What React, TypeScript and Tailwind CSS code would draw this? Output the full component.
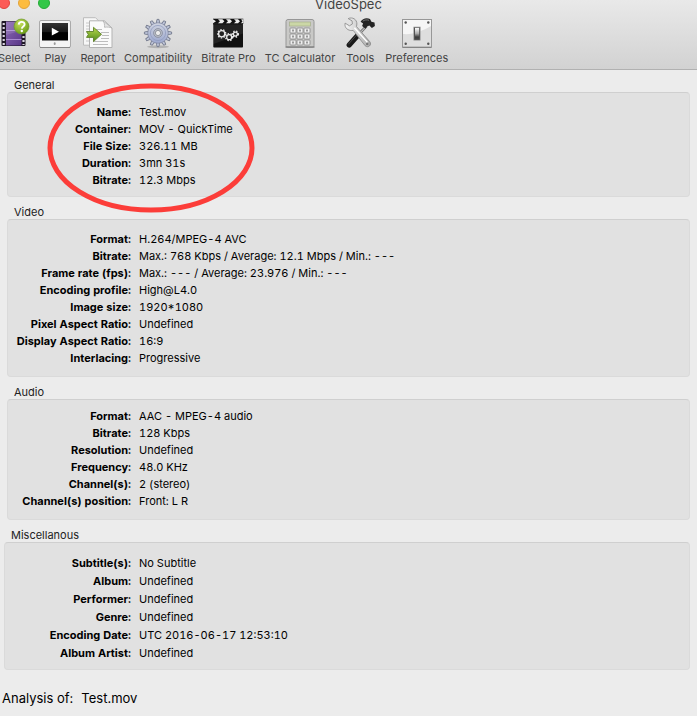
import type { ReactNode } from "react"

type Row = [label: string, value: string]

interface InfoSectionProps {
  title: string
  rows: Row[]
  className?: string
  panelClass: string
  rowClass?: string
  labelClass?: string
  children?: ReactNode
}

const general: Row[] = [
  ["Name:", "Test.mov"],
  ["Container:", "MOV - QuickTime"],
  ["File Size:", "326.11 MB"],
  ["Duration:", "3mn 31s"],
  ["Bitrate:", "12.3 Mbps"],
]

const video: Row[] = [
  ["Format:", "H.264/MPEG-4 AVC"],
  ["Bitrate:", "Max.: 768 Kbps / Average: 12.1 Mbps / Min.: ---"],
  ["Frame rate (fps):", "Max.: --- / Average: 23.976 / Min.: ---"],
  ["Encoding profile:", "High@L4.0"],
  ["Image size:", "1920*1080"],
  ["Pixel Aspect Ratio:", "Undefined"],
  ["Display Aspect Ratio:", "16:9"],
  ["Interlacing:", "Progressive"],
]

const audio: Row[] = [
  ["Format:", "AAC - MPEG-4 audio"],
  ["Bitrate:", "128 Kbps"],
  ["Resolution:", "Undefined"],
  ["Frequency:", "48.0 KHz"],
  ["Channel(s):", "2 (stereo)"],
  ["Channel(s) position:", "Front: L R"],
]

const misc: Row[] = [
  ["Subtitle(s):", "No Subtitle"],
  ["Album:", "Undefined"],
  ["Performer:", "Undefined"],
  ["Genre:", "Undefined"],
  ["Encoding Date:", "UTC 2016-06-17 12:53:10"],
  ["Album Artist:", "Undefined"],
]

function Icon({ children }: { children: ReactNode }) {
  return (
    <svg viewBox="0 0 32 32" className="size-8 shrink-0" aria-hidden="true">
      {children}
    </svg>
  )
}

function SelectIcon() {
  return (
    <Icon>
      <defs>
        <linearGradient id="film" x1="0" y1="0" x2="1" y2="1">
          <stop offset="0" stopColor="#8a68b4" />
          <stop offset="1" stopColor="#5a3788" />
        </linearGradient>
        <radialGradient id="badge" cx="0.4" cy="0.3" r="0.7">
          <stop offset="0" stopColor="#c6e05a" />
          <stop offset="1" stopColor="#6c9d18" />
        </radialGradient>
      </defs>
      <rect x="3.5" y="4" width="24" height="25" rx="1" fill="#1f1826" />
      <rect x="8" y="4.5" width="15.5" height="24" fill="url(#film)" />
      <path d="M8 13.5h15.5M8 22.5h15.5" stroke="#a98bd0" strokeWidth="1" />
      <path d="M8 4.5h15.5v9L8 18z" fill="#fff" opacity="0.12" />
      <path d="M5.7 6v22M25.5 19v9" stroke="#d8d3df" strokeWidth="2.2" strokeDasharray="2 2" />
      <circle cx="23.5" cy="9.5" r="7.5" fill="url(#badge)" stroke="#6f9a2c" strokeWidth="0.7" />
      <path d="M20.7 7.6c.1-3.7 6-3.6 5.9-.2-.1 2-2.7 2.2-2.8 4.2" fill="none" stroke="#fff" strokeWidth="1.9" />
      <circle cx="23.8" cy="14" r="1.2" fill="#fff" />
    </Icon>
  )
}

function PlayIcon() {
  return (
    <Icon>
      <defs>
        <linearGradient id="screen" x1="0" y1="0" x2="0" y2="1">
          <stop offset="0" stopColor="#333" />
          <stop offset="0.5" stopColor="#181818" />
          <stop offset="0.55" stopColor="#000" />
        </linearGradient>
      </defs>
      <rect x="0.5" y="3.5" width="31" height="27" rx="1.5" fill="#f4f4f4" stroke="#aaa" />
      <path d="M1 30.5h30" stroke="#858585" />
      <rect x="3" y="6" width="26" height="17.5" fill="url(#screen)" />
      <path d="M12.8 10.8v7.8l7.2-3.9z" fill="#fff" />
      <ellipse cx="15.7" cy="26.7" rx="1" ry="1.4" fill="#9a9a9a" />
    </Icon>
  )
}

function ReportIcon() {
  return (
    <Icon>
      <defs>
        <linearGradient id="arrow" x1="0" y1="0" x2="0" y2="1">
          <stop offset="0" stopColor="#b9d94b" />
          <stop offset="1" stopColor="#4e8a18" />
        </linearGradient>
      </defs>
      <path d="M1.5.7h12l3.5 3.5v24H1.5z" fill="#f7f7f7" stroke="#bcbcbc" />
      <path d="M4 6h8M4 9h8M4 12h8M4 15h8M4 24h8" stroke="#c8c8c8" />
      <path d="M7.5 3.8h15L30 11v19.5H7.5z" fill="#fafafa" stroke="#b3b3b3" />
      <path d="M21 3.8L30 11c-2-.8-5-1.2-7.5-.7.3-2.5-.2-4.7-1.5-6.5z" fill="#e4e4e4" stroke="#b0b0b0" strokeWidth="0.8" />
      <path d="M11 12.5h9M19 15.5h8M20 18.5h7M19 21.5h8M11 24.5h15M11 27.5h15" stroke="#bdbdbd" />
      <path d="M4.5 14.5h7v-4.2l8 7-8 7.3v-4.2h-7l1.8-2.9z" fill="url(#arrow)" stroke="#5f8128" strokeWidth="0.9" />
    </Icon>
  )
}

const teeth = [0, 30, 60, 90, 120, 150, 180, 210, 240, 270, 300, 330]

function GearIcon() {
  return (
    <Icon>
      <defs>
        <linearGradient id="gear" x1="0" y1="0" x2="0" y2="1">
          <stop offset="0" stopColor="#d0d4e0" />
          <stop offset="1" stopColor="#9ca8ce" />
        </linearGradient>
      </defs>
      <ellipse cx="16" cy="29.7" rx="11" ry="1.5" fill="#000" opacity="0.18" />
      {teeth.map((angle) => (
        <path
          key={angle}
          d="M14.2 7L15 2.4h2L17.8 7z"
          transform={`rotate(${angle} 16 16)`}
          fill="#bec5d9"
          stroke="#747a8d"
          strokeWidth="0.9"
        />
      ))}
      <circle cx="16" cy="16" r="10.3" fill="url(#gear)" stroke="#858ca4" strokeWidth="0.8" />
      <circle cx="16" cy="16" r="7.6" fill="none" stroke="#8d98bd" strokeWidth="0.7" />
      <circle cx="16" cy="16" r="4.4" fill="#b9bdc8" stroke="#858a99" strokeWidth="0.8" />
      <circle cx="16" cy="16" r="2.6" fill="#ededed" stroke="#777c87" strokeWidth="0.7" />
    </Icon>
  )
}

function SmallGear({ cx, cy, r }: { cx: number; cy: number; r: number }) {
  return (
    <g fill="none" stroke="#ececec">
      <circle cx={cx} cy={cy} r={r} strokeWidth="1.3" />
      <circle cx={cx} cy={cy} r={r + 1} strokeWidth="1.3" strokeDasharray="1.4 1.5" />
    </g>
  )
}

function BitrateIcon() {
  return (
    <Icon>
      <rect x="1.3" y="6.5" width="29.7" height="24" rx="0.8" fill="#111" />
      <path d="M1.3 7.5h29.7v9L1.3 27z" fill="#fff" opacity="0.08" />
      <rect x="1" y="1.7" width="30.3" height="5.2" fill="#111" />
      <path
        d="M1 2.3l3 1.9-3 2zM6 2.3h4.4l2 2-2 2H6l2-2zM14 2.3h4l2 2-2 2h-4l2-2zM22 2.3h4l2 2-2 2h-4l2-2zM31.3 2.3l-2.3.2 1.5 1.8-1.5 2 2.3-.2z"
        fill="#eee"
      />
      <SmallGear cx={9.7} cy={16.8} r={3.1} />
      <SmallGear cx={17.2} cy={20.2} r={2.5} />
      <SmallGear cx={23.4} cy={17.1} r={2} />
    </Icon>
  )
}

function CalculatorIcon() {
  return (
    <Icon>
      <rect x="2" y="2.5" width="28" height="28" rx="2" fill="#c9c9c7" stroke="#969696" />
      <path d="M1.5 30h29" stroke="#888" strokeWidth="1.6" />
      <rect x="5.5" y="5" width="21" height="4" fill="#cbd7a6" stroke="#a6ae8e" strokeWidth="0.7" />
      {[11, 17, 23].map((y) =>
        [6, 13, 20].map((x) => (
          <g key={`${x}-${y}`}>
            <rect x={x} y={y} width="6" height="5" rx="0.8" fill="#eee" stroke="#8f8f8f" strokeWidth="0.9" />
            <rect x={x + 2} y={y + 1.5} width="2" height="2" fill="#999" />
          </g>
        ))
      )}
    </Icon>
  )
}

function ToolsIcon() {
  return (
    <Icon>
      <defs>
        <linearGradient id="steel" x1="0" y1="0" x2="1" y2="0">
          <stop offset="0" stopColor="#f6f6f6" />
          <stop offset="1" stopColor="#a8a8a8" />
        </linearGradient>
      </defs>
      {/* hammer */}
      <path d="M22.5 9L14 18" stroke="#777" strokeWidth="2.6" />
      <path d="M22.5 9L14 18" stroke="#d5d5d5" strokeWidth="1" />
      <path d="M14.3 17.7L5.2 28" stroke="#191919" strokeWidth="5.2" strokeLinecap="round" />
      <path d="M12.6 18L4.3 27.3" stroke="#555" strokeWidth="0.8" />
      <path d="M16.6 4.8c1.8-3.2 6-4.4 9.4-2.7l1.4 2.6 3.1.8.4 3.6-3 1.9-2.6-2.4-2.2.8-1.6 2.4-3.4-2.9 1-2.3z" fill="#242424" />
      <path d="M18.8 4.2c1.8-1.4 4-1.7 6.2-.9" fill="none" stroke="#888" strokeWidth="0.8" />
      {/* wrench */}
      <path
        d="M4.2 1.6C8.4-.4 13 2.4 12.9 7l-.4 2.6 13.2 15c2.6 3.2-1.5 7-4.6 4.1L9.2 13.4c-3.7.8-7.8-1.4-8.2-5.1l.1-2.2 4.3 2.7 3-1.8-.3-3.1z"
        fill="url(#steel)"
        stroke="#858585"
        strokeWidth="0.8"
      />
      <path d="M10.4 10.8l13 14.4" stroke="#fff" strokeWidth="1.4" />
      <circle cx="23.2" cy="26.9" r="1.2" fill="#777" />
    </Icon>
  )
}

function PreferencesIcon() {
  return (
    <Icon>
      <defs>
        <linearGradient id="toggle" x1="0" y1="0" x2="0" y2="1">
          <stop offset="0" stopColor="#fff" />
          <stop offset="0.6" stopColor="#aaa" />
          <stop offset="1" stopColor="#333" />
        </linearGradient>
      </defs>
      <rect x="1.5" y="2.5" width="29" height="27.5" fill="#f6f6f6" stroke="#979797" />
      <path d="M2 17C12 18 21 14 30 9v20.5H2z" fill="#dedede" />
      <path d="M1.5 30.3h29" stroke="#777" />
      {[5.5, 26.8].map((y) =>
        [4.7, 27.3].map((x) => <circle key={`${x}-${y}`} cx={x} cy={y} r="1.2" fill="#555" />)
      )}
      <rect x="12.8" y="10" width="6.4" height="13.2" fill="#444" stroke="#aaa" strokeWidth="0.7" />
      <rect x="14" y="10.8" width="4.2" height="9.5" fill="url(#toggle)" />
    </Icon>
  )
}

const tools = [
  { label: "Select", icon: <SelectIcon /> },
  { label: "Play", icon: <PlayIcon /> },
  { label: "Report", icon: <ReportIcon /> },
  { label: "Compatibility", icon: <GearIcon /> },
  { label: "Bitrate Pro", icon: <BitrateIcon /> },
  { label: "TC Calculator", icon: <CalculatorIcon /> },
  { label: "Tools", icon: <ToolsIcon /> },
  { label: "Preferences", icon: <PreferencesIcon /> },
]

function Toolbar() {
  return (
    <header className="overflow-hidden border-b border-[#b1b1b1] bg-linear-to-b from-[#e9e9e9] to-[#d2d2d2]">
      {/* Title bar */}
      <div className="-mt-1 grid h-[21px] grid-cols-3 items-start">
        <div className="-ml-0.5 flex gap-2">
          <button aria-label="Close" className="mt-px size-3 rounded-full border border-[#e0443e] bg-[#fc5b57]" />
          <button aria-label="Minimize" className="mt-px size-3 rounded-full border border-[#e2a33a] bg-[#fdbc40]" />
          <button aria-label="Zoom" className="mt-px size-3 rounded-full border border-[#24aa35] bg-[#33c748]" />
        </div>
        <h1 className="text-center text-[13px] leading-4 text-[#444]">VideoSpec</h1>
      </div>

      <nav className="-ml-0.5 flex gap-[9px] pb-[3px]">
        {tools.map((tool) => (
          <button key={tool.label} className="flex min-w-8 shrink-0 flex-col items-center gap-px">
            {tool.icon}
            <span className="whitespace-nowrap text-[11px] leading-4 text-[#444]">{tool.label}</span>
          </button>
        ))}
      </nav>
    </header>
  )
}

function InfoSection({
  title,
  rows,
  className = "",
  panelClass,
  rowClass = "leading-[17px]",
  labelClass = "w-[123px]",
  children,
}: InfoSectionProps) {
  return (
    <section className={`relative ${className}`}>
      <h2 className="pl-[7px] text-[11px] leading-[14px] text-[#222]">{title}</h2>
      <dl className={`rounded-[4px] border border-[#dadada] border-t-[#cfcfcf] bg-[#e1e1e1] text-[11px] tabular-nums ${panelClass}`}>
        {rows.map(([label, value]) => (
          <div key={label} className={`flex gap-2 ${rowClass}`}>
            <dt className={`shrink-0 whitespace-nowrap text-right font-bold ${labelClass}`}>{label}</dt>
            <dd>{value}</dd>
          </div>
        ))}
      </dl>
      {children}
    </section>
  )
}

export default function App() {
  return (
    <div className="min-h-screen bg-[#ececec] font-['Inter','Liberation_Sans',sans-serif] text-black">
      <Toolbar />

      <main className="flex flex-col gap-2 px-[7px] pt-2">
        <InfoSection title="General" rows={general} panelClass="pt-[11px] pb-[7px]">
          {/* Hand-drawn marker around the values */}
          <svg viewBox="0 0 208 132" className="pointer-events-none absolute top-1 left-10 h-[132px] w-[208px]" aria-hidden="true">
            <ellipse cx="104" cy="66" rx="101" ry="62" fill="none" stroke="#fc3d39" strokeWidth="5" />
          </svg>
        </InfoSection>
        <InfoSection title="Video" rows={video} panelClass="pt-[11px] pb-[9px]" />
        <InfoSection title="Audio" rows={audio} panelClass="pt-2 pb-[9px]" />
        <InfoSection
          title="Miscellanous"
          rows={misc}
          className="-ml-[3px]"
          panelClass="pt-[11px] pb-[7px]"
          rowClass="leading-[18px]"
          labelClass="w-[126px]"
        />
      </main>

      <footer className="flex gap-2 px-0.5 pt-5 pb-2 text-[13px] leading-4">
        <span>Analysis of:</span>
        <span>Test.mov</span>
      </footer>
    </div>
  )
}
